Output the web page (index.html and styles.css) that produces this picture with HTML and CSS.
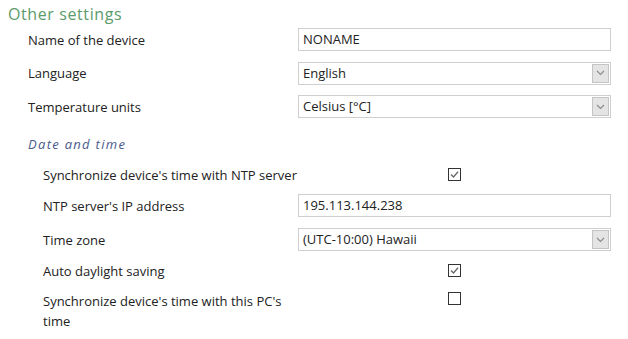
FILE: index.html
```html
<!DOCTYPE html>
<html>
<head>
<meta charset="utf-8">
<link rel="stylesheet" href="styles.css">
</head>
<body>
<div class="page">
  <h1 class="title">Other settings</h1>
  <div class="group">
    <div class="row">
      <div class="label">Name of the device</div>
      <div class="control"><div class="field">NONAME</div></div>
    </div>
    <div class="row">
      <div class="label">Language</div>
      <div class="control"><div class="field select"><span>English</span><span class="arrow"><svg width="9" height="6" viewBox="0 0 9 6"><path d="M1 1 L4.5 4.5 L8 1" fill="none" stroke="#8a8a8a" stroke-width="1.1"/></svg></span></div></div>
    </div>
    <div class="row">
      <div class="label">Temperature units</div>
      <div class="control"><div class="field select"><span>Celsius [°C]</span><span class="arrow"><svg width="9" height="6" viewBox="0 0 9 6"><path d="M1 1 L4.5 4.5 L8 1" fill="none" stroke="#8a8a8a" stroke-width="1.1"/></svg></span></div></div>
    </div>
  </div>
  <h2 class="subtitle">Date and time</h2>
  <div class="group sub">
    <div class="row">
      <div class="label">Synchronize device's time with NTP server</div>
      <div class="control center"><span class="check on"><svg width="11" height="11" viewBox="0 0 11 11"><path d="M2 5.5 L4.5 8 L9 2.8" fill="none" stroke="#666" stroke-width="1.3"/></svg></span></div>
    </div>
    <div class="row">
      <div class="label">NTP server's IP address</div>
      <div class="control"><div class="field">195.113.144.238</div></div>
    </div>
    <div class="row tz">
      <div class="label">Time zone</div>
      <div class="control"><div class="field select"><span>(UTC-10:00) Hawaii</span><span class="arrow"><svg width="9" height="6" viewBox="0 0 9 6"><path d="M1 1 L4.5 4.5 L8 1" fill="none" stroke="#8a8a8a" stroke-width="1.1"/></svg></span></div></div>
    </div>
    <div class="row">
      <div class="label">Auto daylight saving</div>
      <div class="control center"><span class="check on"><svg width="11" height="11" viewBox="0 0 11 11"><path d="M2 5.5 L4.5 8 L9 2.8" fill="none" stroke="#666" stroke-width="1.3"/></svg></span></div>
    </div>
    <div class="row tall">
      <div class="label wrap">Synchronize device's time with this PC's time</div>
      <div class="control center top"><span class="check"></span></div>
    </div>
  </div>
</div>
</body>
</html>
```

FILE: styles.css
```css
html, body {
  margin: 0;
  padding: 0;
  background: #ffffff;
}
body {
  font-family: "Open Sans", "Noto Sans", sans-serif;
  color: #222222;
  font-size: 13px;
}
.page {
  width: 628px;
  height: 339px;
  overflow: hidden;
  padding-top: 4px;
  box-sizing: border-box;
}
.title {
  margin: 0 0 0 8px;
  font-size: 16px;
  line-height: 20px;
  font-weight: normal;
  color: #5b9b69;
  letter-spacing: 0.6px;
}
.group {
  display: flex;
  flex-direction: column;
  gap: 10.5px;
  margin-top: 4px;
  padding-left: 28px;
}
.group.sub {
  padding-left: 43px;
  gap: 8px;
  margin-top: 9px;
}
.row {
  display: flex;
  align-items: center;
  height: 23px;
}
.row.tz {
  margin-top: 3px;
}
.row.tall {
  height: 40px;
  align-items: flex-start;
  margin-top: 1px;
}
.label {
  width: 270px;
  line-height: 20px;
  white-space: nowrap;
}
.sub .label {
  width: 255px;
}
.label.wrap {
  white-space: normal;
  width: 250px;
  margin-right: 5px;
}
.control {
  width: 313px;
  height: 23px;
  display: flex;
  align-items: center;
}
.control.center {
  justify-content: center;
}
.control.top {
  align-items: flex-start;
  padding-top: 1px;
}
.field {
  width: 100%;
  height: 23px;
  box-sizing: border-box;
  border: 1px solid #cfcfcf;
  padding-left: 4px;
  line-height: 21px;
  display: flex;
  align-items: center;
  justify-content: space-between;
}
.field.select {
  padding-right: 1px;
}
.arrow {
  width: 17px;
  height: 19px;
  box-sizing: border-box;
  background: #e4e4e4;
  border: 1px solid #c4c4c4;
  display: flex;
  align-items: center;
  justify-content: center;
}
.check {
  width: 13px;
  height: 13px;
  box-sizing: border-box;
  border: 1px solid #333333;
  display: flex;
  align-items: center;
  justify-content: center;
}
.check svg {
  display: block;
}
.subtitle {
  margin: 16px 0 0 28px;
  font-size: 13px;
  line-height: 20px;
  font-weight: normal;
  font-style: italic;
  color: #4a5a8e;
  letter-spacing: 1.3px;
}
```
